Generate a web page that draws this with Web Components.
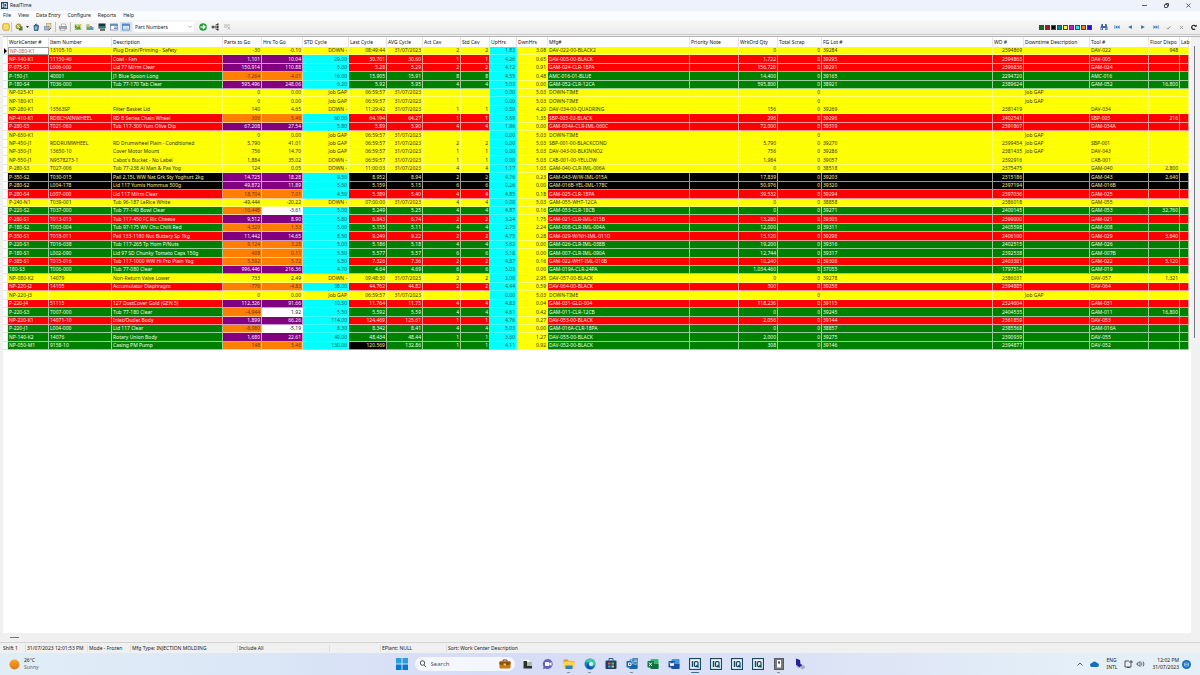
<!DOCTYPE html>
<html lang="en">
<head>
<meta charset="utf-8">
<title>RealTime</title>
<style>
  html, body { margin: 0; height: 100%; }
  body { font-family: "Noto Sans", "Open Sans", sans-serif; font-size: 5px; line-height: 7px; color: #222; background: #f0f0f0; }
</style>
</head>
<body>
<app-window>
  <title-bar slot="top">RealTime</title-bar>
  <menu-bar slot="top"></menu-bar>
  <tool-bar slot="top"></tool-bar>
  <data-grid></data-grid>
  <status-bar slot="bottom"></status-bar>
  <task-bar slot="bottom"></task-bar>
</app-window>
<script>
function define(name, html, ready) {
  const template = document.createElement('template');
  template.innerHTML = html;
  customElements.define(name, class extends HTMLElement {
    constructor() {
      super();
      this.attachShadow({ mode: 'open' }).append(template.content.cloneNode(true));
      if (ready) ready(this.shadowRoot);
    }
  });
}
const svg = (w, h, body, box) => `<svg width="${w}" height="${h}" viewBox="${box || `0 0 ${w} ${h}`}" aria-hidden="true">${body}</svg>`;
const buttonReset = `button { all: unset; box-sizing: border-box; display: flex; align-items: center; justify-content: center; } svg { display: block; }`;

define('app-window', `
<style>
  :host { display: flex; flex-direction: column; min-height: 100vh; background: #f0f0f0; }
  main { flex: 1; display: flex; flex-direction: column; }
</style>
<slot name="top"></slot><main><slot></slot></main><slot name="bottom"></slot>`);

define('title-bar', `
<style>
  ${buttonReset}
  :host { display: flex; align-items: center; height: 11px; background: #eef3fb; font-size: 5px; padding: 0 1px; gap: 2px; }
  .controls { display: flex; margin-left: auto; }
  .controls button { width: 22px; height: 11px; }
</style>
${svg(7, 7, '<rect width="14" height="14" fill="#1f4a73"/><path d="M3 3v8M6 3h5v7H6zM9 9l3 3" stroke="#fff" stroke-width="1.500" fill="none"/>', '0 0 14 14')}
<slot></slot>
<div class="controls">
  <button aria-label="Minimise">${svg(5, 5, '<path d="M0 2.500h5" stroke="#333" stroke-width=".8"/>')}</button>
  <button aria-label="Restore">${svg(5, 5, '<rect x=".5" y="1.500" width="3" height="3" rx=".5" fill="none" stroke="#222" stroke-width=".8"/><path d="M1.500.5h3v3" fill="none" stroke="#222" stroke-width=".8"/>')}</button>
  <button aria-label="Close">${svg(5, 5, '<path d="M.5.5l4 4M4.500.5l-4 4" stroke="#222" stroke-width=".7"/>')}</button>
</div>`);

define('menu-bar', `
<style>
  ${buttonReset}
  :host { display: flex; align-items: center; gap: 7px; height: 9px; padding: 0 3px; background: #fbfcfe; }
</style>
${['File', 'View', 'Data Entry', 'Configure', 'Reports', 'Help'].map(t => `<button>${t}</button>`).join('')}`);

const tools = {
  coin: '<rect x="1" y="1" width="14" height="14" rx="4" fill="#f3cf4e" stroke="#b9912a"/><path d="M4 5h8M4 8h8M4 11h8" stroke="#fff1a8"/>',
  gear: '<circle cx="7" cy="7" r="5" fill="#d8bd48" stroke="#8b8a38" stroke-width="2"/><rect x="8" y="7" width="7" height="8" fill="#4f7d4a"/><path d="M3 3l7 7" stroke="#fff3b0" stroke-width="2"/>',
  can: '<path d="M4 5h9l-1 10H5z" fill="#4f8fb6" stroke="#1d4f6c" stroke-width="1.500"/><path d="M6 4q2-4 5 0" fill="none" stroke="#1d4f6c" stroke-width="2"/><path d="M8 7v6" stroke="#d7eef8" stroke-width="2"/>',
  copy: '<rect x="5" y="1" width="9" height="10" fill="#e8d9a6" stroke="#a08a55"/><rect x="1" y="7" width="9" height="7" fill="#9fb4cc" stroke="#6a7b97"/><path d="M9 15l5-5" stroke="#9c5e28" stroke-width="2"/>',
  print: '<path d="M5 2h8v5H5z" fill="#fff" stroke="#888"/><rect x="1" y="7" width="14" height="5" fill="#a4aeba" stroke="#777"/><rect x="3" y="11" width="9" height="4" fill="#e9edf2" stroke="#888"/>',
  chart: '<rect x="1" y="2" width="14" height="12" fill="#c9e09c"/><path d="M2 13V3l5 5 3-4 4 9z" fill="#4e9648"/><path d="M2 12l5-4 7-5" stroke="#e7b435" stroke-width="2" fill="none"/>',
  folder: '<path d="M1 3h6l1 3h4v8H1z" fill="#7b9e58"/><rect x="6" y="8" width="9" height="6" fill="#5f99c5"/><path d="M2 6h6" stroke="#e8d36c" stroke-width="3"/>',
  monitor: '<rect x="1" y="1" width="14" height="10" fill="#152f45"/><path d="M2 6h12v4H2z" fill="#2e7e69"/><path d="M4 14h10" stroke="#444" stroke-width="3"/>',
  form: '<rect x="1" y="2" width="14" height="12" fill="#fff" stroke="#6682a8" stroke-width="1.500"/><path d="M1 4h14" stroke="#4d74ab" stroke-width="3"/><path d="M8 8h6M8 11h6" stroke="#7a91ac" stroke-width="2"/>',
  grid: '<rect x="1" y="2" width="14" height="12" fill="#e6f1fd" stroke="#4676af" stroke-width="1.500"/><path d="M1 4h14" stroke="#4676af" stroke-width="3"/><path d="M3 8h10M3 11h10" stroke="#8fb1d9"/>',
  go: '<circle cx="8" cy="8" r="7.500" fill="#239b35"/><path d="M3 8h8M8 4l4 4-4 4" fill="none" stroke="#fff" stroke-width="2.500"/>',
  tree: '<path d="M6 8h4M10 3v10M10 3h3M10 8h3M10 13h3" stroke="#444" stroke-width="1.500" fill="none"/><circle cx="4" cy="8" r="3" fill="#555"/><path d="M12 1h3v4h-3zM12 6h3v4h-3zM12 11h3v4h-3z" fill="#333"/>',
  off: '<path d="M2 4h12M2 8h6M9 7l5 6M14 7l-5 6" stroke="#b4b4b4" stroke-width="2" fill="none"/>',
  find: '<path d="M3 2h3v4h4V2h3l2 7v5h-5v-4H6v4H1V9z" fill="#4a689b"/><path d="M3 10v3M12 10v3" stroke="#b9caeb" stroke-width="2"/>',
  first: '<path d="M2 3v10" stroke="#3d7fc4" stroke-width="2"/><path d="M9 3v10L3 8zM15 3v10L9 8z" fill="#3d7fc4"/>',
  prev: '<path d="M13 3v10L3 8z" fill="#3273b9"/>',
  next: '<path d="M3 3v10l10-5z" fill="#3273b9"/>',
  last: '<path d="M14 3v10" stroke="#3d7fc4" stroke-width="2"/><path d="M1 3v10l6-5zM7 3v10l6-5z" fill="#3d7fc4"/>',
  check: '<path d="M2 9l4 4 8-9" stroke="#8b8b8b" stroke-width="3" fill="none"/>',
  cross: '<path d="M3 3l10 10M13 3L3 13" stroke="#9a9a9a" stroke-width="3"/>',
  redo: '<path d="M11 13a5.500 5.500 0 1 1 1-7" stroke="#111" stroke-width="3" fill="none"/><path d="M9 7h6V1z" fill="#111"/>'
};
const tool = (id, label, cls = '', size = 8) => `<button class="${cls}" aria-label="${label}">${svg(size, size, tools[id], '0 0 16 16')}</button>`;

define('tool-bar', `
<style>
  ${buttonReset}
  :host { display: flex; align-items: center; height: 14px; padding: 0 2px; background: linear-gradient(#f7f7f7, #ececec); border-bottom: 1px solid #c9c9c9; margin-bottom: 1px; }
  .group { display: flex; align-items: center; }
  .end { margin-left: auto; }
  .group > button { width: 12px; height: 10px; }
  .group > .first { width: 8px; }
  .group > .on { background: #cfe3f8; }
  .group > .drop { width: 5px; }
  hr { width: 1px; height: 10px; border: 0; margin: 0 1px; background: #c4c4c4; }
  label { position: relative; display: flex; }
  label svg { position: absolute; right: 5px; top: 3px; }
  select { appearance: none; font: inherit; color: inherit; line-height: 8px; height: 10px; width: 60px; margin: 0 3px 0 2px; padding: 0 1px; border: 0; border-radius: 0; background: #fff; }
  .swatches { display: flex; gap: 1px; margin-right: 5px; }
  .swatches button { width: 5px; height: 5px; border: 1px solid #444; }
  .nav > button { width: 13px; }
  .nav > button:last-child { width: 8px; margin-left: 2px; }
</style>
<div class="group">
  ${tool('coin', 'Jobs', 'first')}<hr>${tool('gear', 'Options')}
  <button class="drop" aria-label="More options">${svg(3, 2, '<path d="M0 0h3L1.500 2z" fill="#333"/>')}</button>
  ${tool('can', 'Clear')}${tool('copy', 'Copy')}<hr>${tool('print', 'Print')}<hr>${tool('chart', 'Chart')}${tool('folder', 'Open')}${tool('monitor', 'Monitor')}${tool('form', 'Form')}${tool('grid', 'Grid', 'on')}
  <label><select aria-label="Show by"><option>Part Numbers</option></select>${svg(4, 3, '<path d="M0 .5l2 2 2-2" fill="none" stroke="#777" stroke-width=".6"/>')}</label>
  ${tool('go', 'Go')}${tool('tree', 'Hierarchy')}${tool('off', 'Remove')}
</div>
<div class="group end">
  <div class="swatches">${['#107010', '#a01818', '#000', '#108484', '#ffff30', '#c020c0', '#30e0f0', '#f08020', '#2010c8'].map(c => `<button aria-label="Colour ${c}" style="background:${c}"></button>`).join('')}</div>
  <div class="group nav">${tool('find', 'Find')}${tool('first', 'First', '', 6)}${tool('prev', 'Previous', '', 6)}${tool('next', 'Next', '', 6)}${tool('last', 'Last', '', 6)}${tool('check', 'Post', '', 5)}${tool('cross', 'Cancel', '', 5)}${tool('redo', 'Refresh', '', 6)}</div>
</div>`);

/* Column: title, width (0 takes the spare room), alignment */
const columns = [
  ['WorkCenter #', 41], ['Item Number', 63], ['Description', 111], ['Parts to Go', 39, 'r'], ['Hrs To Go', 41, 'r'],
  ['STD Cycle', 46, 'r'], ['Last Cycle', 38, 'r'], ['AVG Cycle', 36, 'r'], ['Act Cav', 38, 'r'], ['Std Cav', 29, 'r'],
  ['UpHrs', 27, 'r'], ['DwnHrs', 31, 'r'], ['Mfg#', 142], ['Priority Note', 49], ['WrkOrd Qty', 39, 'r'],
  ['Total Scrap', 44, 'r'], ['FG Lot #', 0], ['WO #', 31, 'r'], ['Downtime Description', 66], ['Tool #', 59],
  ['Floor Dispo', 31, 'r'], ['Lab', 9]
];
/* Row: colours of row, parts and hours | values. "@" is the shift date. */
const rows = `
yyy|NP-080-K1|13105-10|Plug Drain/Priming - Safety|-30|-0.10|DOWN -|08:49:44|@|2|2|1.83|3.08|DAV-022-00-BLACK2|0|39284|2394869||DAV-022|948
rpp|NP-140-K1|11150-40|Cowl - Fan|1,101|10.04|29.00|30.701|30.60|1|1|4.26|0.65|DAV-005-00-BLACK|1,722|39295|2394863||DAV-005|
rpp|P-075-S1|L006-000|Lid 77 M/rm Clear|150,914|110.88|5.00|5.28|5.29|2|2|4.12|0.91|GAM-024-CLR-18PA|156,720|39291|2396836||GAM-024|
goo|P-150-J1|40001|J1 Blue Spoon Long|-7,264|-4.01|16.00|15.905|15.91|8|8|4.55|0.48|AMC-016-01-BLUE|14,400|39165|2294720||AMC-016|
gpp|P-180-S4|T036-000|Tub 77-170 Tab Clear|595,496|248.06|6.20|5.92|5.95|4|4|5.03|0.00|GAM-052-CLR-12CA|595,800|38921|2389624||GAM-052|16,800
yyy|NP-025-K1|||0|0.00|Job GAP|06:59:57|@|||0.00|5.03|DOWN-TIME||||Job GAP||
yyy|NP-180-K1|||0|0.00|Job GAP|06:59:57|@|||0.00|5.03|DOWN-TIME||||Job GAP||
yyy|NP-280-K1|13563SP|Filter Basket Lid|140|4.65|DOWN -|11:29:42|@|1|1|0.50|4.20|DAV-034-00-QUADRING|156|39269|2381419||DAV-034|
roo|NP-410-K1|RDBCHAINWHEEL|RD B Series Chain Wheel|306|5.46|60.00|64.194|64.27|1|1|3.69|1.35|SBP-003-02-BLACK|296|39296|2402541||SBP-003|216
rpp|P-280-S5|T021-060|Tub 117-300 Yum Olive Dip|67,208|27.54|5.80|5.89|5.90|4|4|1.96|0.00|GAM-034A-CLR-IML-060C|72,000|39319|2391867||GAM-034A|
yyy|NP-650-K1|||0|0.00|Job GAP|06:59:57|@|||0.00|5.03|DOWN-TIME||||Job GAP||
yyy|NP-450-J1|RDDRUMWHEEL|RD Drumwheel Plain - Conditioned|5,790|41.01|Job GAP|06:59:57|@|2|2|0.00|5.03|SBP-001-00-BLACKCOND|5,790|39270|2399454|Job GAP|SBP-001|
yyy|NP-350-J1|13650-10|Cover Motor Mount|756|14.70|Job GAP|06:59:57|@|1|1|0.00|5.03|DAV-043-00-BLKINNO2|756|39286|2381435|Job GAP|DAV-043|
yyy|NP-550-J1|N9578273-1|Cabot's Bucket - No Label|1,884|35.02|DOWN -|06:59:57|@|1|1|0.00|5.03|CAB-001-00-YELLOW|1,984|39057|2392916||CAB-001|
yyy|P-280-S3|T027-006|Tub 77-238 Al Man &amp; Pas Yog|124|0.05|DOWN -|11:00:03|@|4|4|1.17|1.03|GAM-040-CLR-IML-006A|0|38518|2375475||GAM-040|2,800
kpp|P-350-S2|T030-015|Pail 2.15L WW Nat Grk Sty Yoghurt 2kg|14,725|18.28|9.50|8.952|8.94|2|2|4.76|0.23|GAM-043-W/W-IML-015A|17,839|39203|2315186||GAM-043|2,640
kpp|P-280-S2|L004-178|Lid 117 Yumis Hommus 500g|49,872|11.89|5.50|5.159|5.15|6|6|0.26|0.00|GAM-016B-YEL-IML-178C|50,976|39320|2397194||GAM-016B|
roo|P-280-S4|L007-000|Lid 117 M/rm Clear|18,704|7.01|4.50|5.389|5.40|4|4|4.85|0.18|GAM-025-CLR-18PA|39,532|39294|2397036||GAM-025|
yyy|P-240-N1|T039-001|Tub 96-187 LeRice White|-49,444|-20.22|DOWN -|07:00:00|@|4|4|0.00|5.03|GAM-055-WHT-12CA|0|38858|2386018||GAM-055|
gow|P-220-S2|T037-000|Tub 77-140 Bowl Clear|-10,448|-3.61|5.00|5.249|5.25|4|4|4.87|0.16|GAM-053-CLR-18CB|0|39271|2400145||GAM-053|32,760
rpp|P-280-S1|T013-015|Tub 117-450 FC Ric Cheese|9,512|8.90|5.80|6.843|6.74|2|2|3.24|1.75|GAM-021-CLR-IML-015B|13,280|39305|2399000||GAM-021|
goo|P-180-S2|T003-004|Tub 97-175 WV Chu Chilli Red|4,320|1.53|5.00|5.155|5.11|4|4|2.75|2.24|GAM-008-CLR-IML-004A|12,000|39311|2405598||GAM-008|
rpp|P-350-S1|T018-011|Pail 133-1180 Nut Buttery Sp 1kg|11,442|14.65|8.50|9.249|9.22|2|2|4.75|0.28|GAM-029-W/NH-IML-011D|13,120|39298|2406100||GAM-029|3,840
goo|P-220-S1|T016-038|Tub 117-265 Tp Hom P/Nuts|9,124|3.28|5.00|5.186|5.18|4|4|3.62|0.00|GAM-026-CLR-IML-038B|19,200|39316|2402515||GAM-026|
goo|P-180-S1|L002-090|Lid 97 SD Chunky Tomato Caps 150g|408|0.11|5.50|5.577|5.57|6|6|3.18|0.00|GAM-007-CLR-IML-090A|12,744|39317|2392538||GAM-007B|
roo|P-385-S1|T015-016|Tub 117-1000 WW Hi Pro Plain Yog|5,592|5.72|6.50|7.326|7.36|2|2|4.87|0.16|GAM-022-WHT-IML-016B|10,240|39308|2403381||GAM-022|5,120
gpp|180-S3|T006-000|Tub 77-080 Clear|996,446|216.36|4.70|4.64|4.69|6|6|5.03|0.00|GAM-019A-CLR-24PA|1,034,460|37055|1797514||GAM-019|
yyy|NP-080-K2|14079|Non-Return Valve Lower|733|2.49|DOWN -|09:48:30|@|2|2|2.00|2.95|DAV-057-00-BLACK|0|39278|2386031||DAV-057|1,321
roo|NP-220-J2|14105|Accumulator Diaphragm|-776|-4.83|38.00|44.762|44.82|2|2|4.44|0.59|DAV-064-00-BLACK|300|39258|2394885||DAV-064|
yyy|NP-220-J3|||0|0.00|Job GAP|06:59:57|@|||0.00|5.03|DOWN-TIME||||Job GAP||
rpp|P-220-J4|51115|127 DustCover Gold (GEN 5)|112,326|91.66|10.50|11.764|11.75|4|4|4.83|0.04|GAM-031-GLD-004|118,236|39115|2324604||GAM-031|
gow|P-220-S3|T007-000|Tub 77-180 Clear|-4,944|1.92|5.50|5.592|5.59|4|4|4.61|0.42|GAM-011-CLR-12CB|0|39245|2404535||GAM-011|16,800
rpp|NP-220-K1|14071-10|Inlet/Outlet Body|1,899|66.26|114.00|124.469|125.61|1|1|4.76|0.27|DAV-053-00-BLACK|2,056|39144|2361859||DAV-053|
gow|P-220-J1|L004-000|Lid 117 Clear|-8,080|-5.19|8.30|8.342|8.41|4|4|5.03|0.00|GAM-016A-CLR-18PA|0|38857|2385568||GAM-016A|
gpp|NP-140-K2|14076|Rotary Union Body|1,680|22.61|49.00|48.434|48.44|1|1|3.60|1.27|DAV-055-00-BLACK|2,000|39275|2390939||DAV-055|
goo|NP-050-M1|9158-10|Casing PM Pump|148|5.46|130.00|120.569|132.86|1|1|4.11|0.92|DAV-052-00-BLACK|308|39146|2394877||DAV-052|`.trim().split('\n');

define('data-grid', `
<style>
  :host { flex: 1; display: grid; grid-template-columns: 1fr 11px; grid-template-rows: 1fr 8px; margin-left: 3px; background: #fff; border-top: 1px solid #b5b5b5; }
  table { width: 100%; table-layout: fixed; border-collapse: separate; border-spacing: 0; align-self: start; }
  th, td { padding: 0 1px; text-align: left; white-space: nowrap; line-height: 7px; font-weight: 400; box-sizing: border-box; }
  th { height: 9px; border-right: 1px solid #e6e6e6; color: #111; }
  thead tr { height: 10px; }
  td { height: 8px; border: solid rgba(255, 255, 255, .6); border-width: 0 1px 1px 0; }
  /* three rows in seven are a pixel taller */
  tr:nth-child(7n + 2) td, tr:nth-child(7n + 4) td, tr:nth-child(7n + 7) td { height: 9px; }
  .num { text-align: right; }
  .red { background: #f00; color: #ffe4e4; }
  .y { background: #ff0; color: #303000; border-color: rgba(255, 255, 255, .45); }
  .g { background: #008000; color: #f0fff0; }
  .k { background: #000; color: #f4f490; }
  .p { background: #800080; color: #fff0ff; }
  .o { background: #ff8000; color: #6c3000; }
  .w { background: #fff; color: #222; }
  .c { background: #0ff; color: #045858; border-color: rgba(255, 255, 255, .25); }
  tbody .mark { background: #fff; border-color: #e4e4e4; padding: 0; }
  .mark svg { display: block; }
  .current { background: #fff; color: #a06060; border: 1px solid #999; line-height: 6px; }
  .vbar { background: #f1f1f1; margin-left: 2px; padding: 9px 3px 0; }
  .vbar i { display: block; width: 1px; height: 292px; background: #77777f; }
  .hbar { grid-column: 1 / -1; background: #f0f0f0; display: flex; align-items: center; padding-left: 7px; }
  .hbar i { width: 9px; height: 1px; background: #777; }
</style>
<table>
  <colgroup><col style="width:5px">${columns.map(c => c[1] ? `<col style="width:${c[1]}px">` : '<col>').join('')}</colgroup>
  <thead><tr><th></th>${columns.map(c => `<th scope="col">${c[0]}</th>`).join('')}</tr></thead>
  <tbody></tbody>
</table>
<div class="vbar"><i></i></div>
<div class="hbar"><i></i></div>`, root => {
  const name = { r: 'red' };
  root.querySelector('tbody').innerHTML = rows.map((line, n) => {
    const [hues, ...v] = line.split('|');
    const [row, parts, hrs] = [...hues].map(h => name[h] || h);
    v.splice(13, 0, '');
    v.splice(15, 0, '0');
    v.push('');
    const tone = i => i === 3 ? parts : i === 4 ? hrs : i === 10 ? 'c' : i === 11 ? 'y'
      : i === 5 && row !== 'y' ? 'c' : i === 6 && v[6] === '120.569' ? 'k' : n === 0 && i === 0 ? 'current' : row;
    return `<tr><td class="mark">${n ? '' : svg(4, 6, '<path d="M1 0v6l3-3z" fill="#000"/>')}</td>` + v.map((text, i) =>
      `<td class="${tone(i)}${columns[i][2] ? ' num' : ''}">${text.replace('@', '31/07/2023')}</td>`).join('') + '</tr>';
  }).join('');
});

define('status-bar', `
<style>
  :host { display: grid; grid-template-columns: 22px 62px 43px 107px 92px 51px 66px 1fr; align-items: center; height: 10px; margin-top: 1px; padding-left: 3px; border-top: 1px solid #d4d4d4; background: #f0f0f0; white-space: nowrap; }
  span + span { border-left: 1px solid #ddd; padding-left: 1px; min-height: 7px; }
</style>
${['Shift 1', '31/07/2023 12:01:53 PM', 'Mode - Frozen', 'Mfg Type: INJECTION MOLDING', 'Include All', '', 'EPlant: NULL', 'Sort: Work Center Description'].map(t => `<span>${t}</span>`).join('')}`);

const iq = '<rect x="1" y="1" width="22" height="22" fill="#eef6fb" stroke="#174766" stroke-width="2.500"/><path d="M7 6v12" stroke="#174766" stroke-width="3"/><rect x="11" y="7" width="7" height="10" rx="2" fill="none" stroke="#174766" stroke-width="2.500"/><path d="M15 14l4 5" stroke="#174766" stroke-width="2.500"/>';
const office = (dark, light, mark) => `<rect x="7" y="2" width="16" height="20" rx="2" fill="${light}"/><path d="M7 12h16v8a2 2 0 0 1-2 2H7z" fill="${dark}"/><rect x="1" y="6" width="13" height="13" rx="1.500" fill="${dark}"/><path d="${mark}" fill="none" stroke="#fff" stroke-width="2"/>`;
const apps = [
  ['Task view', '<rect x="4" y="3" width="13" height="13" fill="#f8f8f8" stroke="#ddd"/><path d="M5 6v15h17v-6H12V6z" fill="#2b3033"/><rect x="12" y="8" width="10" height="8" fill="#aab6b4"/>'],
  ['Chat', '<path d="M12 2a10 10 0 1 1-5 19l-5 1 1-5A10 10 0 0 1 12 2z" fill="#6661be"/><rect x="6" y="8" width="9" height="8" rx="2" fill="#fff"/><path d="M15 11l4-3v8l-4-3z" fill="#fff"/>'],
  ['File Explorer', '<path d="M1 3h8l3 3h11v5H1z" fill="#d99a20"/><path d="M1 7h22v14H1z" fill="#ffd252"/><path d="M5 15h14v7H5z" fill="#2484cf"/>', 'open'],
  ['Edge', '<circle cx="12" cy="12" r="11" fill="#1681ca"/><path d="M2 9C5-1 21-1 23 10c0 5-5 7-9 5 3-5-5-9-12-6z" fill="#45c7a0"/><path d="M9 11c-2 6 4 10 11 8-4 5-12 4-14-1-1-3 0-6 3-7z" fill="#0d4b92"/><circle cx="14" cy="12" r="4" fill="#e9f5fc"/>', 'open'],
  ['Store', '<path d="M8 5V1h8v4" fill="none" stroke="#2d628e" stroke-width="2"/><rect x="1" y="5" width="22" height="17" rx="2" fill="#1e3f63"/><path d="M6 9h5v4H6z" fill="#e65b3c"/><path d="M13 9h5v4h-5z" fill="#7cb943"/><path d="M6 15h5v4H6z" fill="#37a5e5"/><path d="M13 15h5v4h-5z" fill="#f5c22b"/>'],
  ['Outlook', office('#1266b3', '#48a8e3', 'M5 10h5v5H5z') + '<circle cx="19" cy="5" r="8" fill="#3f86bd" stroke="#e9f2fb"/><path d="M15 7h8M16 4h6" stroke="#fff"/>', 'open'],
  ['Excel', office('#107040', '#35b878', 'M4 9l6 7M10 9l-6 7')],
  ['Word', office('#1752a8', '#4596df', 'M4 9l2 7 2-6 2 6 2-7')],
  ['IQ', iq, 'active'], ['IQ 2', iq], ['IQ 3', iq], ['IQ 4', iq],
  ['Device', '<rect x="3" y="1" width="18" height="22" fill="#77797e" stroke="#595b60" stroke-width="2"/><rect x="8" y="4" width="8" height="15" fill="#fff"/><path d="M10 7h4v4h-4z" fill="#444"/>', 'open'],
  ['Remote', '<path d="M4 1l8 3 1 8 4 2-6 5-7-5z" fill="#21219a"/><path d="M12 18l7-4 4 5-7 4z" fill="#a4a9bd"/><path d="M4 15l6 5" stroke="#b5b8d2" stroke-width="3"/>']
];

define('task-bar', `
<style>
  ${buttonReset}
  :host { display: grid; grid-template-columns: 1fr auto 1fr; align-items: center; height: 22px; background: linear-gradient(90deg, #e1edf6 0%, #dbe7f6 20%, #d6dcf6 40%, #dbe1f5 65%, #e4eff8 90%); }
  .weather { display: flex; align-items: center; gap: 4px; padding-left: 9px; }
  small { display: block; font-size: 5px; color: #666; }
  .apps { display: flex; align-items: center; gap: 9px; }
  .apps button { width: 12px; height: 18px; position: relative; }
  .apps .start { width: 14px; }
  .open::after, .active::after { content: ""; position: absolute; bottom: 0; width: 3px; height: 1px; background: #888; border-radius: 1px; }
  .active::after { width: 8px; background: #2f7299; }
  .search { display: flex; align-items: center; gap: 4px; box-sizing: border-box; width: 100px; height: 14px; padding: 0 4px; margin: 0 -3px; border-radius: 7px; background: #f4f7fd; }
  input { font: inherit; font-size: 6px; min-width: 0; flex: 1; border: 0; padding: 0; background: none; color: #555; outline: 0; }
  input::placeholder { color: #555; opacity: 1; }
  .tray { display: flex; justify-content: flex-end; align-items: center; gap: 7px; padding-right: 9px; }
  .tray .net { display: flex; gap: 3px; }
  .clock { text-align: right; margin-right: -4px; }
</style>
<div class="weather">
  ${svg(11, 11, '<defs><linearGradient id="s" x2="0" y2="1"><stop stop-color="#f4a52a"/><stop offset="1" stop-color="#df7712"/></linearGradient></defs><circle cx="5.500" cy="5.500" r="5" fill="url(#s)"/>')}
  <div>26°C<small>Sunny</small></div>
</div>
<div class="apps">
  <button class="start" aria-label="Start">${svg(12, 12, '<path d="M0 0h11v11H0zM13 0h11v11H13z" fill="#279fdf"/><path d="M0 13h11v11H0zM13 13h11v11H13z" fill="#0879c8"/>', '0 0 24 24')}</button>
  <div class="search">
    ${svg(8, 8, '<circle cx="7" cy="6" r="4.500" fill="none" stroke="#222" stroke-width="1.500"/><path d="M10 10l4 4" stroke="#222" stroke-width="1.500"/>', '0 0 16 16')}
    <input type="search" aria-label="Search" placeholder="Search">
    ${svg(12, 10, '<path d="M8 5V2h8v3" fill="none" stroke="#6e3d0a" stroke-width="2"/><rect x="1" y="5" width="22" height="14" rx="2" fill="#c47a13"/><path d="M1 5h22v6l-11 2-11-2z" fill="#8e4e0c"/><rect x="9" y="9" width="5" height="4" fill="#f5c94b"/>', '0 0 24 20')}
  </div>
  ${apps.map(([label, art, state]) => `<button class="${state || ''}" aria-label="${label}">${svg(12, 12, art, '0 0 24 24')}</button>`).join('')}
</div>
<div class="tray">
  <button aria-label="Hidden icons">${svg(6, 4, '<path d="M.5 3.500L3 1l2.500 2.500" fill="none" stroke="#333" stroke-width=".8"/>')}</button>
  <button aria-label="OneDrive">${svg(9, 6, '<path d="M2 6a2 2 0 0 1 0-4 2.800 2.800 0 0 1 5 0 2 2 0 0 1 0 4z" fill="#0f70c0"/>')}</button>
  <div>ENG<br>INTL</div>
  <div class="net">
    ${svg(9, 8, '<path d="M7 4v3H1V1h4M3 7.500h3M6 1h2v2H6z" fill="none" stroke="#333" stroke-width=".8"/>')}
    ${svg(9, 8, '<path d="M1 3h1.500L4 1.500v5L2.500 5H1z" fill="none" stroke="#333" stroke-width=".7"/><path d="M5.500 2.500q1 1.500 0 3M7 1.500q2 2.500 0 5" fill="none" stroke="#333" stroke-width=".7"/>')}
  </div>
  <div class="clock">12:02 PM<br>31/07/2023</div>
  <button aria-label="Notifications">${svg(9, 9, '<circle cx="4.500" cy="4.500" r="4.500" fill="#1673c0"/><path d="M2.500 3h4v3h-4zM3 4.500h3" fill="none" stroke="#cfe5f6" stroke-width=".6"/>')}</button>
</div>`);
</script>
</body>
</html>
